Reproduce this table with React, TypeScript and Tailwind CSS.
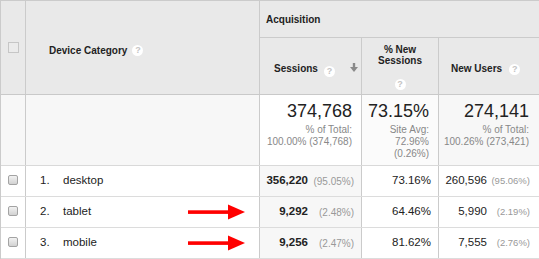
import React from "react";

function Help() {
  return (
    <span className="inline-flex h-[11px] w-[11px] shrink-0 items-center justify-center rounded-full bg-white text-[9px] font-bold leading-none text-[#c4c4c4]">
      ?
    </span>
  );
}

function RowCheckbox() {
  return (
    <span className="block h-[10px] w-[10px] rounded-[2px] border border-[#a3a3a3] bg-gradient-to-b from-[#f2f2f2] to-[#d2d2d2]" />
  );
}

function Arrow() {
  return (
    <svg width="57" height="16" viewBox="0 0 57 16" className="ml-auto mr-[14px] shrink-0">
      <rect x="0" y="6.3" width="42" height="3.6" fill="#ff0000" />
      <polygon points="40,0.5 57,8 40,15.5" fill="#ff0000" />
    </svg>
  );
}

type Row = {
  idx: string;
  name: string;
  sessions: string;
  sessPct: string;
  pctNew: string;
  newUsers: string;
  nuPct: string;
  arrow: boolean;
};

const rows: Row[] = [
  { idx: "1.", name: "desktop", sessions: "356,220", sessPct: "(95.05%)", pctNew: "73.16%", newUsers: "260,596", nuPct: "(95.06%)", arrow: false },
  { idx: "2.", name: "tablet", sessions: "9,292", sessPct: "(2.48%)", pctNew: "64.46%", newUsers: "5,990", nuPct: "(2.19%)", arrow: true },
  { idx: "3.", name: "mobile", sessions: "9,256", sessPct: "(2.47%)", pctNew: "81.62%", newUsers: "7,555", nuPct: "(2.76%)", arrow: true },
];

export default function App() {
  return (
    <div className="h-[259px] w-[539px] overflow-hidden border-l border-t border-[#cbcbcb] bg-white font-['Liberation_Sans',Arial,sans-serif] text-[#222]">
      {/* Header */}
      <div className="flex h-[94px] border-b border-[#c9c9c9] bg-[#e9e9e9]">
        <div className="flex w-[25px] shrink-0 items-center justify-center border-r border-[#cbcbcb]">
          <span className="block h-[11px] w-[11px] border border-[#c6c6c6] bg-[#ebebeb]" />
        </div>
        <div className="flex w-[234px] shrink-0 items-center gap-[5px] border-r border-[#cbcbcb] pl-[23px] pt-[6px]">
          <span className="text-[10px] font-bold leading-none text-[#222]">Device Category</span>
          <Help />
        </div>
        <div className="flex flex-1 flex-col">
          <div className="flex h-[42px] items-center border-b border-[#cbcbcb] pl-[6px] pt-[1px]">
            <span className="text-[10px] font-bold text-[#222]">Acquisition</span>
          </div>
          <div className="flex flex-1">
            <div className="flex w-[102px] shrink-0 items-center border-r border-[#cbcbcb] pl-[14px] pr-[3px] pt-[6px]">
              <span className="text-[10px] font-bold leading-none">Sessions</span>
              <span className="ml-[6px]">
                <Help />
              </span>
              <svg width="8" height="9" viewBox="0 0 8 9" className="ml-auto -mt-[3px]">
                <rect x="2.8" y="0" width="2.4" height="5" fill="#8a8a8a" />
                <polygon points="0,4 8,4 4,9" fill="#8a8a8a" />
              </svg>
            </div>
            <div className="flex w-[77px] shrink-0 flex-col items-center border-r border-[#cbcbcb] pt-[6px]">
              <span className="text-center text-[10px] font-bold leading-[11px]">
                % New
                <br />
                Sessions
              </span>
              <span className="mt-[4px]">
                <Help />
              </span>
            </div>
            <div className="flex flex-1 items-center gap-[7px] pl-[12px] pt-[6px]">
              <span className="text-[10px] font-bold leading-none">New Users</span>
              <Help />
            </div>
          </div>
        </div>
      </div>

      {/* Totals row */}
      <div className="flex h-[71px] border-b border-[#d9d9d9]">
        <div className="w-[25px] shrink-0 border-r border-[#cbcbcb] bg-[#f7f7f7]" />
        <div className="w-[234px] shrink-0 border-r border-[#cbcbcb] bg-[#f7f7f7]" />
        <div className="flex w-[102px] shrink-0 flex-col items-end border-r border-[#cbcbcb] bg-white pr-[9px] pt-[6px] text-right">
          <span className="text-[18px] leading-[20px] text-[#222]">374,768</span>
          <span className="mt-[3px] text-[10px] leading-[12px] text-[#888]">
            % of Total:
            <br />
            100.00% (374,768)
          </span>
        </div>
        <div className="flex w-[77px] shrink-0 flex-col items-end border-r border-[#cbcbcb] bg-[#fbfbfb] pr-[9px] pt-[6px] text-right">
          <span className="text-[18px] leading-[20px] text-[#222]">73.15%</span>
          <span className="mt-[3px] text-[10px] leading-[12px] text-[#888]">
            Site Avg:
            <br />
            72.96%
            <br />
            (0.26%)
          </span>
        </div>
        <div className="flex flex-1 flex-col items-end bg-[#f7f7f7] pr-[10px] pt-[6px] text-right">
          <span className="text-[18px] leading-[20px] text-[#222]">274,141</span>
          <span className="mt-[3px] text-[10px] leading-[12px] text-[#888]">
            % of Total:
            <br />
            100.26% (273,421)
          </span>
        </div>
      </div>

      {/* Data rows */}
      {rows.map((r) => (
        <div key={r.idx} className="flex h-[31px] border-b border-[#dcdcdc]">
          <div className="flex w-[25px] shrink-0 items-center justify-center border-r border-[#cbcbcb] pb-[2px]">
            <RowCheckbox />
          </div>
          <div className="flex w-[234px] shrink-0 items-center border-r border-[#cbcbcb] pl-[14px] text-[11.5px]">
            <span className="w-[23px] shrink-0">{r.idx}</span>
            <span>{r.name}</span>
            {r.arrow && <Arrow />}
          </div>
          <div className="flex w-[102px] shrink-0 items-center justify-end border-r border-[#cbcbcb] bg-[#f7f7f7] pr-[7px]">
            <span className="text-[11.5px] font-bold">{r.sessions}</span>
            <span className="w-[46px] shrink-0 text-right text-[10px] text-[#999]">{r.sessPct}</span>
          </div>
          <div className="flex w-[77px] shrink-0 items-center justify-end border-r border-[#cbcbcb] pr-[7px] text-[11.5px]">
            {r.pctNew}
          </div>
          <div className="flex flex-1 items-center justify-end pr-[9px]">
            <span className="text-[11.5px]">{r.newUsers}</span>
            <span className="w-[43px] shrink-0 text-right text-[9.5px] text-[#999]">{r.nuPct}</span>
          </div>
        </div>
      ))}
    </div>
  );
}
